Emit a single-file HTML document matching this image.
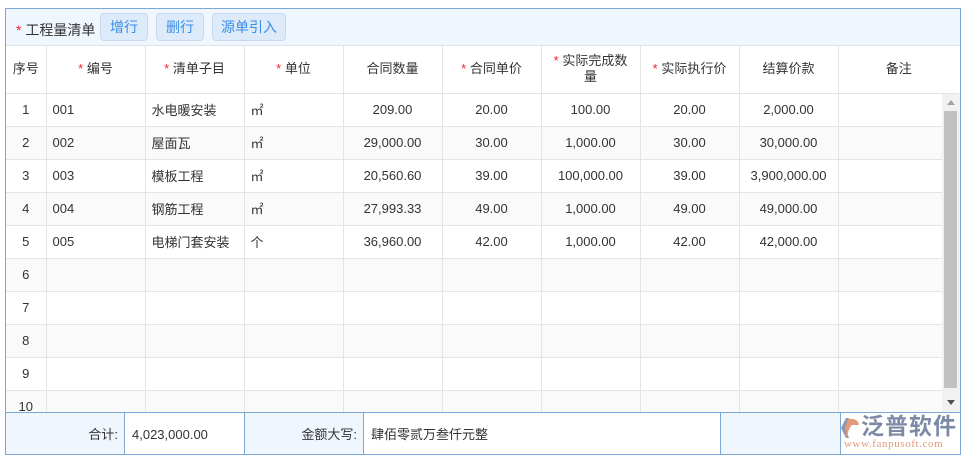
<!DOCTYPE html>
<html><head><meta charset="utf-8"><style>
*{box-sizing:border-box;margin:0;padding:0}
body{width:966px;height:459px;background:#fff;font-family:"Liberation Sans","Noto Sans CJK SC",sans-serif;font-size:13px;color:#333;position:relative;overflow:hidden}
.box{position:absolute;left:5px;top:8px;width:956px;height:447px;border:1px solid #7aa7d6;overflow:hidden}
.tb{position:absolute;left:0;top:0;width:954px;height:37px;background:#f0f6fe;border-bottom:1px solid #dde3ea}
.tb .t{position:absolute;left:10px;top:11px;font-size:14px;color:#333}
.r{color:#f5222d}
.btn{position:absolute;top:4px;height:28px;border:1px solid #c5daf0;background:#ddeafa;border-radius:4px;color:#3a8ee6;font-size:14px;line-height:26px;text-align:center}
table{border-collapse:collapse;table-layout:fixed;position:absolute;left:0}
td{border-right:1px solid #e4e4e4;border-bottom:1px solid #e4e4e4;height:33px;text-align:center;white-space:nowrap;overflow:hidden}
td.l{text-align:left;padding-left:6px}
.hd td{height:47px;background:#fff;line-height:16px}
.bd tr:nth-child(even) td{background:#fafafa}
.sb{position:absolute;left:936px;top:85px;width:18px;height:319px;background:#f1f1f1}
.th{position:absolute;left:2px;top:17px;width:13px;height:277px;background:#c1c1c1}
.ft{position:absolute;top:403px;height:42px;border-top:1px solid #7aa7d6;line-height:44px;font-size:13px;background:#fff}
</style></head><body>
<div class="box">
 <div class="tb"><span class="t"><span class="r">*</span> 工程量清单</span>
  <div class="btn" style="left:94px;width:48px">增行</div>
  <div class="btn" style="left:150px;width:48px">删行</div>
  <div class="btn" style="left:206px;width:74px">源单引入</div>
 </div>
 <table class="hd" style="top:37px;width:953px">
  <colgroup><col style="width:40px"><col style="width:99px"><col style="width:99px"><col style="width:99px"><col style="width:99px"><col style="width:99px"><col style="width:99px"><col style="width:99px"><col style="width:99px"><col style="width:121px"></colgroup>
  <tr><td>序号</td><td><span class="r">*</span> 编号</td><td><span class="r">*</span> 清单子目</td><td><span class="r">*</span> 单位</td><td>合同数量</td><td><span class="r">*</span> 合同单价</td><td style="white-space:normal;padding:0 8px;line-height:16px"><span class="r">*</span> 实际完成数量</td><td><span class="r">*</span> 实际执行价</td><td>结算价款</td><td style="border-right:none">备注</td></tr>
 </table>
 <table class="bd" style="top:84px;width:937px">
  <colgroup><col style="width:40px"><col style="width:99px"><col style="width:99px"><col style="width:99px"><col style="width:99px"><col style="width:99px"><col style="width:99px"><col style="width:99px"><col style="width:99px"><col style="width:105px"></colgroup>
  <tr><td>1</td><td class="l">001</td><td class="l">水电暖安装</td><td class="l">㎡</td><td>209.00</td><td>20.00</td><td>100.00</td><td>20.00</td><td>2,000.00</td><td></td></tr>
  <tr><td>2</td><td class="l">002</td><td class="l">屋面瓦</td><td class="l">㎡</td><td>29,000.00</td><td>30.00</td><td>1,000.00</td><td>30.00</td><td>30,000.00</td><td></td></tr>
  <tr><td>3</td><td class="l">003</td><td class="l">模板工程</td><td class="l">㎡</td><td>20,560.60</td><td>39.00</td><td>100,000.00</td><td>39.00</td><td>3,900,000.00</td><td></td></tr>
  <tr><td>4</td><td class="l">004</td><td class="l">钢筋工程</td><td class="l">㎡</td><td>27,993.33</td><td>49.00</td><td>1,000.00</td><td>49.00</td><td>49,000.00</td><td></td></tr>
  <tr><td>5</td><td class="l">005</td><td class="l">电梯门套安装</td><td class="l">个</td><td>36,960.00</td><td>42.00</td><td>1,000.00</td><td>42.00</td><td>42,000.00</td><td></td></tr>
  <tr><td>6</td><td></td><td></td><td></td><td></td><td></td><td></td><td></td><td></td><td></td></tr>
  <tr><td>7</td><td></td><td></td><td></td><td></td><td></td><td></td><td></td><td></td><td></td></tr>
  <tr><td>8</td><td></td><td></td><td></td><td></td><td></td><td></td><td></td><td></td><td></td></tr>
  <tr><td>9</td><td></td><td></td><td></td><td></td><td></td><td></td><td></td><td></td><td></td></tr>
  <tr><td>10</td><td></td><td></td><td></td><td></td><td></td><td></td><td></td><td></td><td></td></tr>
 </table>
 <div class="sb">
  <div style="position:absolute;left:5px;top:6px;width:0;height:0;border-left:4px solid transparent;border-right:4px solid transparent;border-bottom:5px solid #a3a3a3"></div>
  <div class="th"></div>
  <div style="position:absolute;left:5px;top:306px;width:0;height:0;border-left:4px solid transparent;border-right:4px solid transparent;border-top:5px solid #505050"></div>
 </div>
 <div class="ft" style="left:0;width:119px;background:#f0f6fe;text-align:right;padding-right:6px;border-right:1px solid #7aa7d6">合计:</div>
 <div class="ft" style="left:119px;width:120px;padding-left:7px;border-right:1px solid #7aa7d6">4,023,000.00</div>
 <div class="ft" style="left:239px;width:119px;background:#f0f6fe;text-align:right;padding-right:6px;border-right:1px solid #7aa7d6">金额大写:</div>
 <div class="ft" style="left:358px;width:357px;padding-left:7px;border-right:1px solid #7aa7d6">肆佰零贰万叁仟元整</div>
 <div class="ft" style="left:715px;width:120px;background:#f0f6fe;border-right:1px solid #7aa7d6"></div>
 <div class="ft" style="left:835px;width:120px;background:#fff"></div>
 <svg style="position:absolute;left:831px;top:405px" width="24" height="28" viewBox="0 0 24 28"><path d="M4 14 L9 4 L12 4 L8 14 L12 24 L9 24 Z" fill="#8a97b0"/><path d="M11 5 Q21 4 22 11 L15 11 Q11 15 10 24 L8 14 Z" fill="#e39a78"/></svg>
 <div style="position:absolute;left:855px;top:403px;font-size:23px;color:#7d8aa6;letter-spacing:1px;font-weight:bold;line-height:28px">泛普软件</div>
 <div style="position:absolute;left:838px;top:429px;font-size:11px;color:#e39a78;font-family:'Liberation Serif',serif;letter-spacing:0.6px">www.fanpusoft.com</div>
</div>
</body></html>
